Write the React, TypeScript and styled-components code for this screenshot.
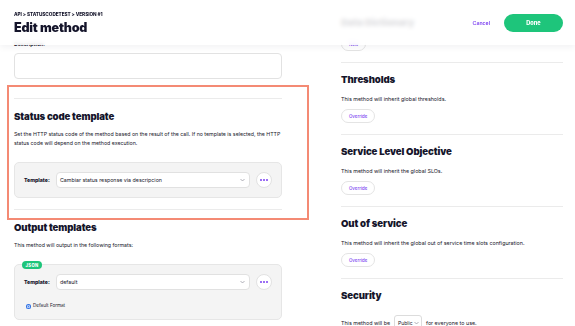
import React from "react";
import styled, { createGlobalStyle } from "styled-components";

const GlobalStyle = createGlobalStyle`
  html, body { margin: 0; padding: 0; background: #ffffff; overflow: hidden; }
  body { font-family: Inter, "Noto Sans", sans-serif; color: #16162a; -webkit-font-smoothing: antialiased; }
  * { box-sizing: border-box; }
`;

const Header = styled.header`
  position: fixed;
  top: 0;
  left: 0;
  right: 0;
  height: 45px;
  display: flex;
  align-items: center;
  justify-content: space-between;
  padding: 0 12px 0 14px;
  background: rgba(255, 255, 255, 0.86);
  backdrop-filter: blur(2px);
  box-shadow: 0 2px 7px rgba(20, 20, 50, 0.06);
  z-index: 10;
`;

const TitleBlock = styled.div`
  display: flex;
  flex-direction: column;
  margin-top: 1px;
`;

const Breadcrumb = styled.div`
  font-size: 4.7px;
  line-height: 7px;
  font-weight: 800;
  text-transform: uppercase;
  color: #15152b;
  letter-spacing: -0.05px;
`;

const PageTitle = styled.h1`
  margin: 2px 0 0;
  font-size: 12.5px;
  line-height: 15px;
  font-weight: 900;
  color: #15152b;
  letter-spacing: -0.2px;
`;

const Actions = styled.div`
  display: flex;
  align-items: center;
  gap: 14px;
  margin-top: 1px;
`;

const CancelLink = styled.span`
  font-size: 5.2px;
  font-weight: 600;
  color: #7b3ff0;
`;

const DoneButton = styled.button`
  width: 59px;
  height: 18px;
  border: none;
  border-radius: 9px;
  background: #1ec57b;
  color: #ffffff;
  font-family: inherit;
  font-size: 5.6px;
  font-weight: 800;
  padding: 0;
`;

const Page = styled.main`
  display: grid;
  grid-template-columns: 268px 222px;
  column-gap: 59px;
  padding: 0 12px 0 14px;
`;

const LeftColumn = styled.div`
  display: flex;
  flex-direction: column;
  padding-top: 19px;
`;

const RightColumn = styled.div`
  display: flex;
  flex-direction: column;
  padding-top: 5px;
`;

const GhostInput = styled.div`
  width: 101px;
  height: 14px;
  border: 1px solid #ececec;
  border-radius: 3px;
`;

const FieldLabel = styled.label`
  display: block;
  margin-top: 7px;
  font-size: 5.2px;
  line-height: 8px;
  font-weight: 700;
  color: #15152b;
`;

const TextArea = styled.div`
  margin-top: 5px;
  height: 26px;
  border: 1px solid #e2e2e2;
  border-radius: 4px;
  background: #fff;
`;

const Highlight = styled.section`
  margin: 6px -27px 0 -7px;
  padding: 11px 25px 8px 5px;
  border: 2px solid #f48a74;
`;

const Divider = styled.hr<{ $gap?: number }>`
  margin: ${(p) => p.$gap ?? 0}px 0 0;
  border: none;
  border-top: 1px solid #ebebeb;
  height: 0;
`;

const SectionTitle = styled.h2<{ $top?: number }>`
  margin: ${(p) => p.$top ?? 11}px 0 0;
  font-size: 9.6px;
  line-height: 14px;
  font-weight: 900;
  color: #15152b;
  letter-spacing: -0.1px;
`;

const BodyText = styled.p<{ $top?: number }>`
  margin: ${(p) => p.$top ?? 6}px 0 0;
  font-size: 5.25px;
  line-height: 9px;
  color: #17172a;
`;

const TemplateBox = styled.div<{ $top?: number }>`
  position: relative;
  margin-top: ${(p) => p.$top ?? 14}px;
  padding: 9px;
  background: #f4f4f4;
  border: 1px solid #e6e6e6;
  border-radius: 5px;
  display: flex;
  flex-direction: column;
  gap: 8px;
`;

const Badge = styled.span`
  position: absolute;
  top: -4px;
  left: 7px;
  width: 20px;
  height: 8px;
  border-radius: 4px;
  background: #1ec57b;
  color: #fff;
  font-size: 4.2px;
  font-weight: 800;
  letter-spacing: 0.3px;
  display: flex;
  align-items: center;
  justify-content: center;
`;

const TemplateRow = styled.div`
  display: flex;
  align-items: center;
  gap: 6px;
`;

const RowLabel = styled.span`
  width: 26px;
  font-size: 5.2px;
  font-weight: 800;
  color: #15152b;
`;

const SelectBox = styled.div`
  flex: 1;
  height: 16px;
  background: #fff;
  border: 1px solid #e1e1e1;
  border-radius: 4px;
  display: flex;
  align-items: center;
  justify-content: space-between;
  padding: 0 4px 0 3px;
  font-size: 5.3px;
  color: #17172a;
`;

const Chevron = styled.svg`
  width: 5px;
  height: 4px;
  flex: none;
`;

const DotsButton = styled.div`
  width: 16px;
  height: 16px;
  border-radius: 50%;
  background: #fff;
  border: 1px solid #e2e2e2;
  display: flex;
  align-items: center;
  justify-content: center;
  gap: 1.2px;
  flex: none;
`;

const Dot = styled.span`
  width: 2.2px;
  height: 2.2px;
  border-radius: 50%;
  background: #7b3ff0;
`;

const RadioRow = styled.div`
  display: flex;
  align-items: center;
  gap: 2px;
  padding-left: 2px;
  margin-top: 4px;
  font-size: 4.6px;
  line-height: 8px;
  color: #17172a;
`;

const Radio = styled.span`
  width: 5px;
  height: 5px;
  border-radius: 50%;
  background: #3b82f6;
  box-shadow: inset 0 0 0 1px #2f6fe0, inset 0 0 0 1.6px #fff;
`;

const RightSection = styled.section<{ $bottom?: number }>`
  border-top: 1px solid #ebebeb;
  padding: 10px 0 ${(p) => p.$bottom ?? 11}px;
  display: flex;
  flex-direction: column;
  align-items: flex-start;
`;

const RightTitle = styled.h2`
  margin: 0;
  font-size: 9.6px;
  line-height: 14px;
  font-weight: 900;
  color: #15152b;
  letter-spacing: -0.1px;
`;

const RightText = styled.p<{ $top?: number }>`
  margin: ${(p) => p.$top ?? 8}px 0 0;
  font-size: 5.35px;
  line-height: 8px;
  color: #17172a;
  display: flex;
  align-items: center;
  gap: 4px;
`;

const PillButton = styled.button<{ $top?: number }>`
  margin-top: ${(p) => p.$top ?? 6}px;
  height: 14px;
  padding: 0 7px;
  border-radius: 7px;
  background: #fff;
  border: 1px solid #e4e4e4;
  color: #7b3ff0;
  font-family: inherit;
  font-size: 4.4px;
  font-weight: 500;
`;

const InlineSelect = styled.span`
  height: 16px;
  width: 28px;
  border: 1px solid #dcdcdc;
  border-radius: 3px;
  display: inline-flex;
  align-items: center;
  justify-content: space-between;
  padding: 0 2px 0 3px;
  font-size: 5px;
`;

const ChevronIcon = () => (
  <Chevron viewBox="0 0 10 6">
    <path d="M1 1l4 4 4-4" fill="none" stroke="#8a8a96" strokeWidth="1.3" />
  </Chevron>
);

const Dots = () => (
  <DotsButton>
    <Dot />
    <Dot />
    <Dot />
  </DotsButton>
);

export default function App() {
  return (
    <>
      <GlobalStyle />
      <Header>
        <TitleBlock>
          <Breadcrumb>API &gt; STATUSCODETEST &gt; VERSION #1</Breadcrumb>
          <PageTitle>Edit method</PageTitle>
        </TitleBlock>
        <Actions>
          <CancelLink>Cancel</CancelLink>
          <DoneButton>Done</DoneButton>
        </Actions>
      </Header>
      <Page>
        <LeftColumn>
          <GhostInput />
          <FieldLabel>Description:</FieldLabel>
          <TextArea />
          <Highlight>
            <Divider />
            <SectionTitle>Status code template</SectionTitle>
            <BodyText>
              Set the HTTP status code of the method based on the result of the call. If no template is selected, the HTTP
              status code will depend on the method execution.
            </BodyText>
            <TemplateBox>
              <TemplateRow>
                <RowLabel>Template:</RowLabel>
                <SelectBox>
                  <span>Cambiar status response via descripcion</span>
                  <ChevronIcon />
                </SelectBox>
                <Dots />
              </TemplateRow>
            </TemplateBox>
            <Divider $gap={11} />
          </Highlight>
          <SectionTitle $top={1}>Output templates</SectionTitle>
          <BodyText>This method will output in the following formats:</BodyText>
          <TemplateBox $top={14}>
            <Badge>JSON</Badge>
            <TemplateRow>
              <RowLabel>Template:</RowLabel>
              <SelectBox>
                <span>default</span>
                <ChevronIcon />
              </SelectBox>
              <Dots />
            </TemplateRow>
            <RadioRow>
              <Radio />
              Default Format
            </RadioRow>
          </TemplateBox>
        </LeftColumn>
        <RightColumn>
          <RightSection>
            <RightTitle>Data Dictionary</RightTitle>
            <PillButton $top={7}>New</PillButton>
          </RightSection>
          <RightSection>
            <RightTitle>Thresholds</RightTitle>
            <RightText>This method will inherit global thresholds.</RightText>
            <PillButton>Override</PillButton>
          </RightSection>
          <RightSection>
            <RightTitle>Service Level Objective</RightTitle>
            <RightText>This method will inherit the global SLOs.</RightText>
            <PillButton>Override</PillButton>
          </RightSection>
          <RightSection>
            <RightTitle>Out of service</RightTitle>
            <RightText>This method will inherit the global out of service time slots configuration.</RightText>
            <PillButton>Override</PillButton>
          </RightSection>
          <RightSection>
            <RightTitle>Security</RightTitle>
            <RightText $top={12}>
              This method will be
              <InlineSelect>
                Public
                <ChevronIcon />
              </InlineSelect>
              for everyone to use.
            </RightText>
          </RightSection>
        </RightColumn>
      </Page>
    </>
  );
}
